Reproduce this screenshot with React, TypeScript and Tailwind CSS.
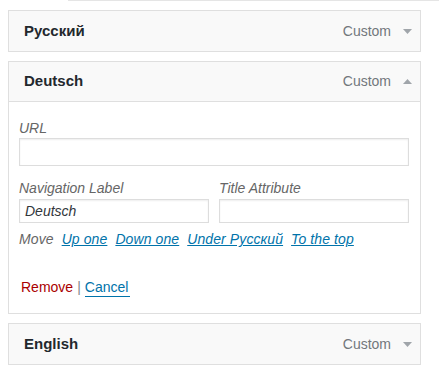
import React from "react";

function Arrow({ up }: { up?: boolean }) {
  return (
    <svg width="9" height="5" viewBox="0 0 9 5" className="ml-[12px] mr-[8px]">
      <polygon points={up ? "0,5 9,5 4.5,0" : "0,0 9,0 4.5,5"} fill="#a0a5aa" />
    </svg>
  );
}

function ItemHeader({ title, up, open }: { title: string; up?: boolean; open?: boolean }) {
  return (
    <div
      className={`h-[40px] flex items-center justify-between bg-[#f9f9f9] pl-[15px] ${
        open ? "border-b border-[#dfdfdf]" : ""
      }`}
    >
      <span className="text-[15px] font-bold text-[#23282d]">{title}</span>
      <div className="flex items-center">
        <span className="text-[14px] text-[#72777c]">Custom</span>
        <Arrow up={up} />
      </div>
    </div>
  );
}

function Field({ label, value, tall }: { label: string; value?: string; tall?: boolean }) {
  return (
    <div className="flex flex-col">
      <span className="text-[14px] leading-5 italic text-[#666]">{label}</span>
      <div
        className={`${tall ? "h-[28px]" : "h-[24px] mt-px"} flex items-center border border-[#ddd] bg-white px-[5px] shadow-[inset_0_1px_2px_rgba(0,0,0,0.07)] text-[14px] italic text-[#32373c]`}
      >
        {value}
      </div>
    </div>
  );
}

export default function App() {
  return (
    <div className="w-[439px] h-[377px] bg-white overflow-hidden font-['Liberation_Sans',Arial,sans-serif]">
      <div className="ml-[68px] h-px bg-[#e5e5e5]" />

      <div className="mt-[9px] ml-2 w-[413px] border border-[#dfdfdf]">
        <ItemHeader title="Русский" />
      </div>

      <div className="mt-[9px] ml-2 w-[413px] border border-[#dfdfdf] bg-white">
        <ItemHeader title="Deutsch" up open />
        <div className="pt-[16px] pb-[16px] pl-[10px] pr-[11px]">
          <Field label="URL" tall />
          <div className="mt-[12px] grid grid-cols-2 gap-[10px]">
            <Field label="Navigation Label" value="Deutsch" />
            <Field label="Title Attribute" />
          </div>
          <div className="mt-[6px] text-[14px] leading-5 italic text-[#666] flex gap-[8px] tracking-[0.1px]">
            <span>Move</span>
            <a className="text-[#0073aa] underline">Up one</a>
            <a className="text-[#0073aa] underline">Down one</a>
            <a className="text-[#0073aa] underline">Under Русский</a>
            <a className="text-[#0073aa] underline">To the top</a>
          </div>
          <div className="mt-[28px] pl-[2px] text-[14px] leading-5">
            <a className="text-[#a00]">Remove</a>
            <span className="text-[#82878c] mx-[4px]">|</span>
            <a className="text-[#0073aa] border-b border-[#0073aa] pb-px pr-[2px]">Cancel</a>
          </div>
        </div>
      </div>

      <div className="mt-[9px] ml-2 w-[413px] border border-[#dfdfdf]">
        <ItemHeader title="English" />
      </div>
    </div>
  );
}
